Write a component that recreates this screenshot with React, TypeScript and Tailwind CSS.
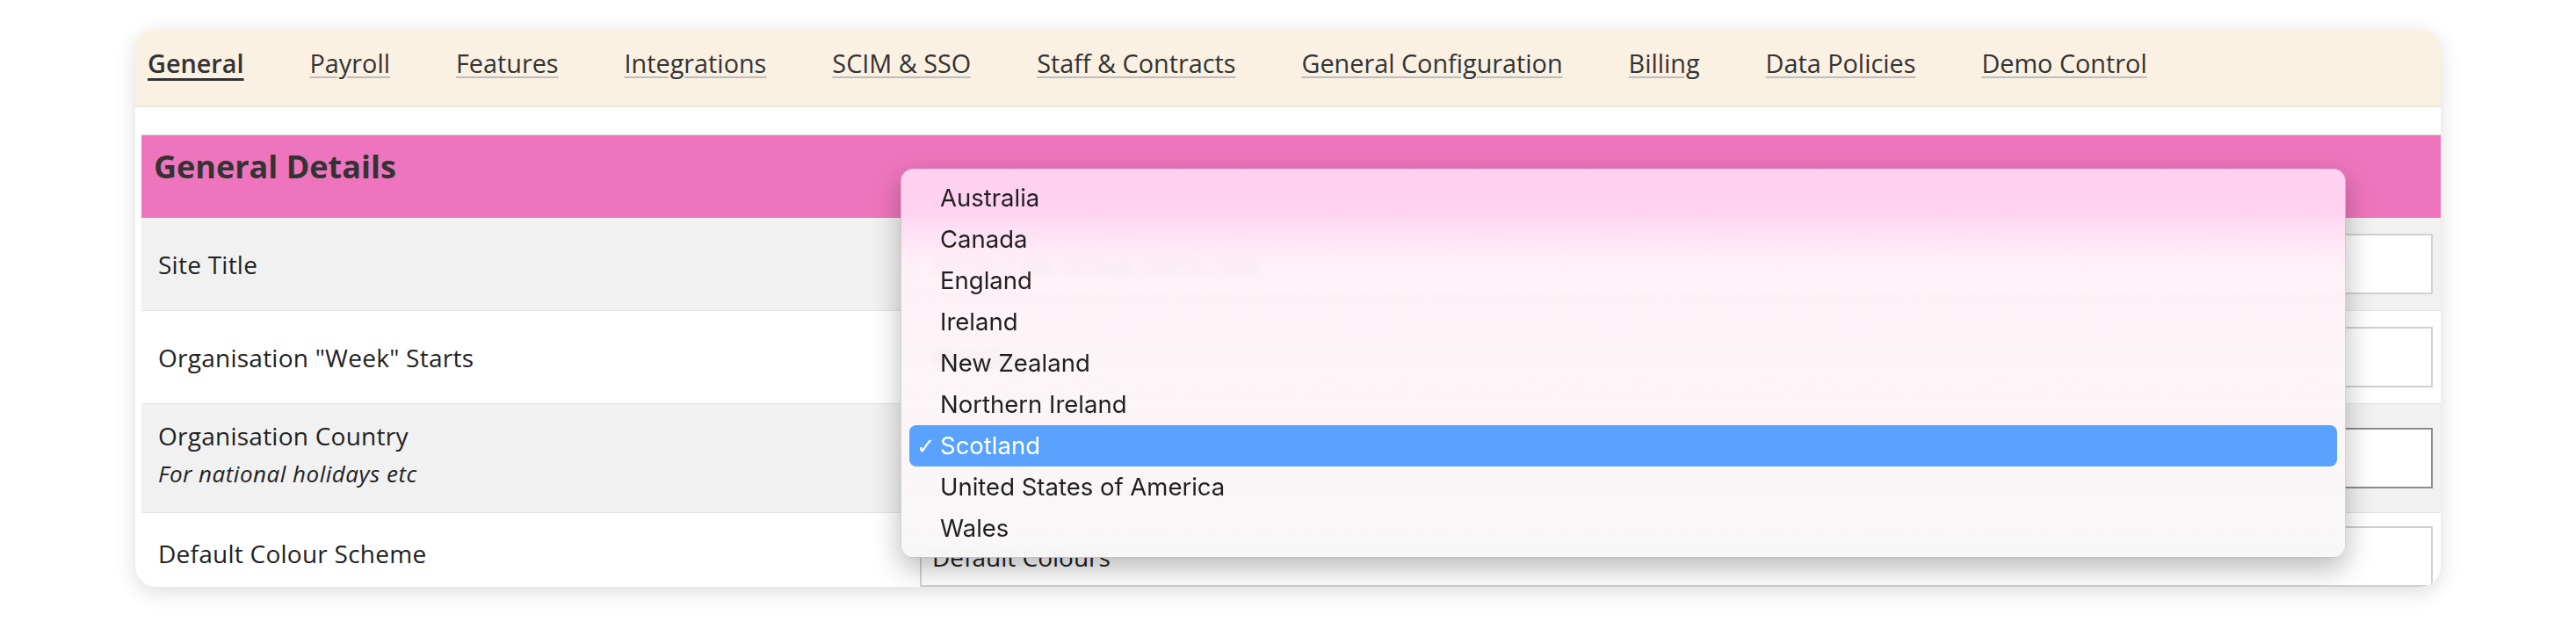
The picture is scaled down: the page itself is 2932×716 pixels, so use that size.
import { type ReactNode } from 'react'

const tabs = [
  'General',
  'Payroll',
  'Features',
  'Integrations',
  'SCIM & SSO',
  'Staff & Contracts',
  'General Configuration',
  'Billing',
  'Data Policies',
  'Demo Control',
]

const countries = [
  'Australia',
  'Canada',
  'England',
  'Ireland',
  'New Zealand',
  'Northern Ireland',
  'Scotland',
  'United States of America',
  'Wales',
]

const selected = 'Scotland'

function Row({
  label,
  hint,
  value,
  shaded,
  focused,
  last,
}: {
  label: string
  hint?: string
  value: string
  shaded?: boolean
  focused?: boolean
  last?: boolean
}) {
  return (
    <div
      className={`flex items-center ${shaded ? 'bg-[#f1f1f1]' : 'bg-white'} ${
        last ? 'items-start' : 'border-b border-[#e3e3e8]'
      }`}
    >
      <div
        className={`w-[886px] shrink-0 pl-[19px] ${hint ? 'pb-[26px] pt-[18px]' : ''} ${
          last ? 'pt-[28px]' : ''
        }`}
      >
        <div className="text-[28px] leading-[36px] tracking-[0.25px] text-[#222]">{label}</div>
        {hint && (
          <div className="mt-[7px] text-[26px] italic leading-[36px] tracking-[0.5px] text-[#222]">
            {hint}
          </div>
        )}
      </div>
      <div className={`flex-1 pr-[9px] ${last ? 'pt-[15px]' : 'py-[18px]'}`}>
        <Field focused={focused}>{value}</Field>
      </div>
    </div>
  )
}

function Field({ children, focused }: { children: ReactNode; focused?: boolean }) {
  return (
    <div
      className={`flex h-[69px] items-center border-2 bg-white pl-[12px] text-[28px] text-[#222] ${
        focused ? 'border-[#8c8c8c]' : 'border-[#d0d0d0]'
      }`}
    >
      {children}
    </div>
  )
}

// native-looking select popup, floated over the form
function CountryMenu() {
  return (
    <div
      className="absolute left-[871px] top-[159px] w-[1645px] rounded-[14px] border border-black/15 bg-[linear-gradient(to_bottom,rgba(255,211,241,0.96)_0px,rgba(255,214,242,0.96)_50px,rgba(255,240,247,0.93)_110px,rgba(252,245,247,0.93)_60%,rgba(248,247,248,0.96)_100%)] py-[9px] shadow-[0_12px_32px_rgba(0,0,0,0.28)] backdrop-blur-[6px]"
      style={{ fontFamily: 'Inter, "Liberation Sans", sans-serif' }}
    >
      {countries.map((c) => {
        const on = c === selected
        return (
          <div
            key={c}
            className={`mx-[9px] flex h-[47px] items-center rounded-[8px] pl-[8px] text-[27.5px] ${
              on ? 'bg-[#59a2fe] text-white' : 'text-[#1f1f1f]'
            }`}
          >
            <span
              className="w-[27px] text-[26px] leading-none"
              style={{ fontFamily: '"DejaVu Sans", sans-serif' }}
            >
              {on ? '✓' : ''}
            </span>
            {c}
          </div>
        )
      })}
    </div>
  )
}

export default function App() {
  return (
    <div
      className="min-h-screen bg-white px-[154px] pt-[33px]"
      style={{ fontFamily: '"Open Sans", "Noto Sans", sans-serif' }}
    >
      <div className="relative h-[635px] overflow-hidden rounded-[24px] bg-white shadow-[0_6px_24px_rgba(0,0,0,0.14)]">
        {/* settings tabs */}
        <nav className="flex h-[89px] gap-[75px] border-b-2 border-[#e7e5e1] bg-[#fbf1e3] pl-[14px] pt-[21px]">
          {tabs.map((t, i) => (
            <a
              key={t}
              className={`whitespace-nowrap text-[28.8px] leading-[36px] text-[#333] underline ${
                i === 0
                  ? 'font-semibold decoration-[#333] decoration-[3px] underline-offset-[6px]'
                  : 'decoration-[#bdbdbd] decoration-2 underline-offset-[4px]'
              }`}
            >
              {t}
            </a>
          ))}
        </nav>

        <div className="ml-[7px] mt-[31px] border-t border-[#dcdcdc]">
          <div className="h-[94px] bg-[#ee75bd] pl-[14px] pt-[18px]">
            <h2 className="text-[36px] font-bold leading-[36px] text-[#333]">General Details</h2>
          </div>
          <Row label="Site Title" value="Acme Care Group Demo Site" shaded />
          <Row label={'Organisation "Week" Starts'} value="Monday" />
          <Row
            label="Organisation Country"
            hint="For national holidays etc"
            value="Scotland"
            shaded
            focused
          />
          <Row label="Default Colour Scheme" value="Default Colours" last />
        </div>

        <CountryMenu />
      </div>
    </div>
  )
}
